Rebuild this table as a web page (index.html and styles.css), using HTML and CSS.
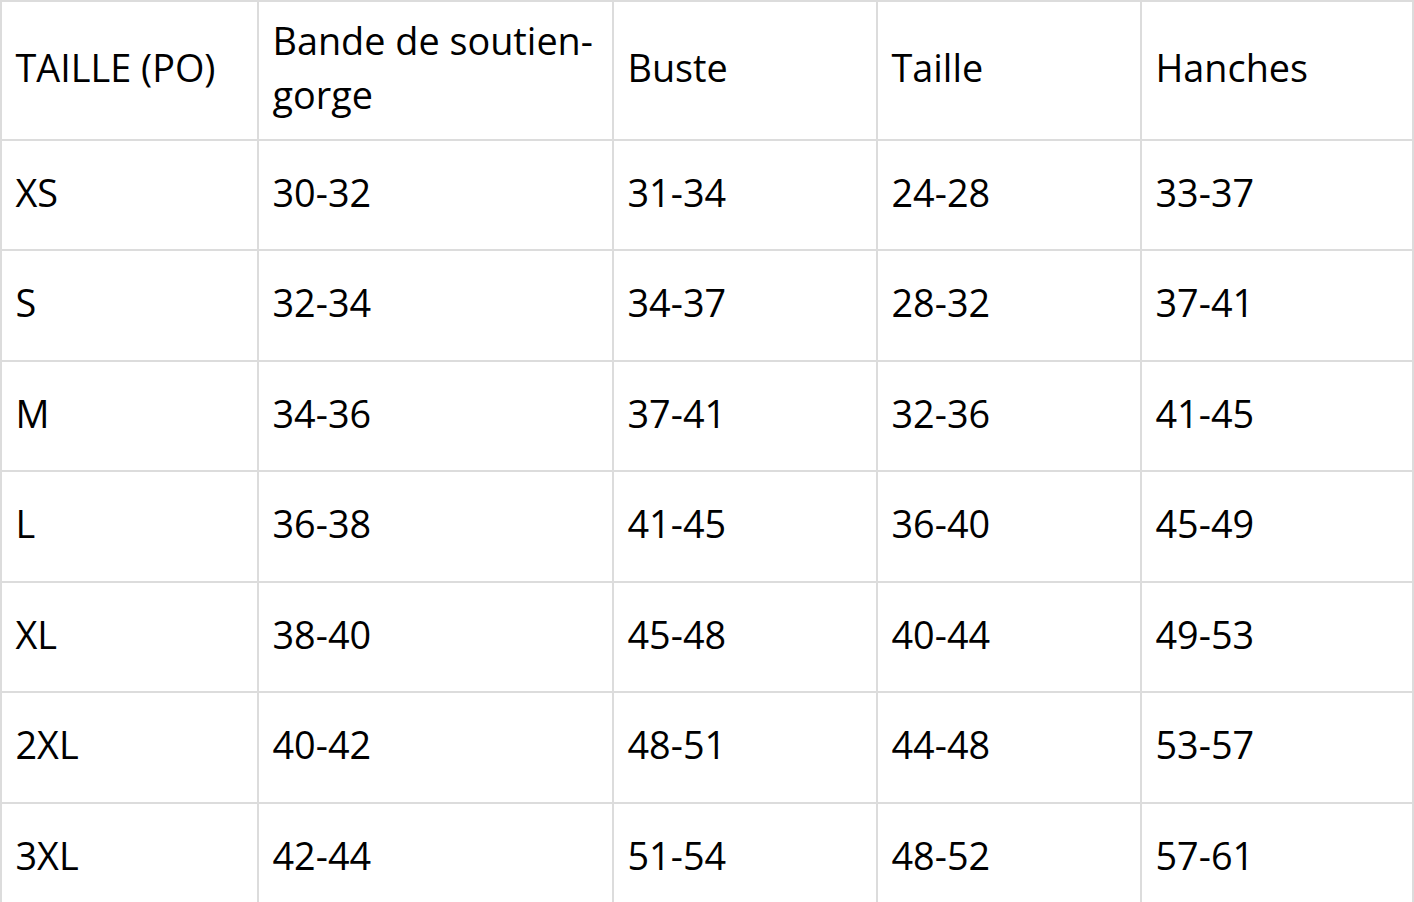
FILE: index.html
```html
<!DOCTYPE html>
<html lang="fr">
<head>
<meta charset="utf-8">
<title>Tableau des tailles</title>
<link rel="stylesheet" href="styles.css">
</head>
<body>
<table class="size-table">
  <colgroup>
    <col class="c1"><col class="c2"><col class="c3"><col class="c4"><col class="c5">
  </colgroup>
  <thead>
    <tr class="head-row">
      <th>TAILLE (PO)</th>
      <th>Bande de soutien-gorge</th>
      <th>Buste</th>
      <th>Taille</th>
      <th>Hanches</th>
    </tr>
  </thead>
  <tbody>
    <tr><td>XS</td><td>30-32</td><td>31-34</td><td>24-28</td><td>33-37</td></tr>
    <tr><td>S</td><td>32-34</td><td>34-37</td><td>28-32</td><td>37-41</td></tr>
    <tr><td>M</td><td>34-36</td><td>37-41</td><td>32-36</td><td>41-45</td></tr>
    <tr><td>L</td><td>36-38</td><td>41-45</td><td>36-40</td><td>45-49</td></tr>
    <tr><td>XL</td><td>38-40</td><td>45-48</td><td>40-44</td><td>49-53</td></tr>
    <tr><td>2XL</td><td>40-42</td><td>48-51</td><td>44-48</td><td>53-57</td></tr>
    <tr><td>3XL</td><td>42-44</td><td>51-54</td><td>48-52</td><td>57-61</td></tr>
  </tbody>
</table>
</body>
</html>
```

FILE: styles.css
```css
html, body {
  margin: 0;
  padding: 0;
  background: #ffffff;
}

body {
  font-family: "Open Sans", "Noto Sans", sans-serif;
  color: #000000;
  overflow: hidden;
}

.size-table {
  width: 1414px;
  table-layout: fixed;
  border-collapse: separate;
  border-spacing: 0;
  border-top: 2px solid #dcdcdc;
  border-left: 2px solid #dcdcdc;
}

.c1 { width: 257px; }
.c2 { width: 355px; }
.c3 { width: 264px; }
.c4 { width: 264px; }
.c5 { width: 272px; }

.size-table th,
.size-table td {
  font-size: 37.8px;
  line-height: 53.5px;
  font-weight: 400;
  text-align: left;
  vertical-align: middle;
  padding: 0 12px 5px 13.5px;
  border-right: 2px solid #dcdcdc;
  border-bottom: 2px solid #dcdcdc;
  box-sizing: border-box;
}

.head-row th {
  height: 138.5px;
}

.size-table tbody td {
  height: 110.5px;
}
```
